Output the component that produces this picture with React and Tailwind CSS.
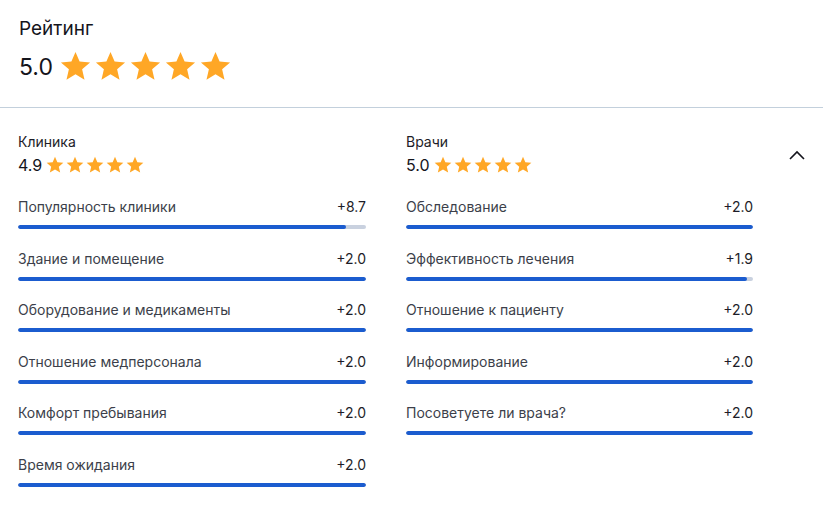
import React from "react";

const Star = ({ size }) => (
  <svg width={size} height={size} viewBox="0 0 24 24" className="shrink-0">
    <path fill="#FFA726" d="M12 17.27L18.18 21l-1.64-7.03L22 9.24l-7.19-.61L12 2 9.19 8.63 2 9.24l5.46 4.73L5.82 21z" />
  </svg>
);

const Stars = ({ size, gap }) => (
  <div className={`flex items-center ${gap}`}>
    {[0, 1, 2, 3, 4].map((i) => (
      <Star key={i} size={size} />
    ))}
  </div>
);

const Row = ({ label, value, pct }) => (
  <div className="flex flex-col h-[51.6px]">
    <div className="flex justify-between items-center text-[14px] leading-[20px]">
      <span className="text-[#3c3f4a]">{label}</span>
      <span className="text-[#1d1d28]">{value}</span>
    </div>
    <div className="mt-[8px] h-[4px] rounded-full bg-[#c9d1df] overflow-hidden">
      <div className="h-full rounded-full bg-[#1b5ccf]" style={{ width: pct + "%" }} />
    </div>
  </div>
);

const clinic = [
  ["Популярность клиники", "+8.7", 94.3],
  ["Здание и помещение", "+2.0", 100],
  ["Оборудование и медикаменты", "+2.0", 100],
  ["Отношение медперсонала", "+2.0", 100],
  ["Комфорт пребывания", "+2.0", 100],
  ["Время ожидания", "+2.0", 100],
];
const doctors = [
  ["Обследование", "+2.0", 100],
  ["Эффективность лечения", "+1.9", 98.2],
  ["Отношение к пациенту", "+2.0", 100],
  ["Информирование", "+2.0", 100],
  ["Посоветуете ли врача?", "+2.0", 100],
];

const Column = ({ title, score, rows, width }) => (
  <div className={width}>
    <div className="text-[14px] leading-[20px] text-[#1d1d28]">{title}</div>
    <div className="flex items-center mt-[2px]">
      <span className="text-[16px] leading-[22px] text-[#14141c] mr-[3px]">{score}</span>
      <Stars size={20} gap="gap-[0px]" />
    </div>
    <div className="mt-[21px]">
      {rows.map(([l, v, p]) => (
        <Row key={l} label={l} value={v} pct={p} />
      ))}
    </div>
  </div>
);

export default function App() {
  return (
    <div className="w-[823px] h-[509px] bg-white" style={{ fontFamily: "Inter, 'Noto Sans', sans-serif" }}>
      <div className="h-[108px] border-b border-[#c3d0dc] px-[19px] pt-[16px]">
        <div className="text-[19px] leading-[26px] text-[#14141c]">Рейтинг</div>
        <div className="flex items-center mt-[7px]">
          <span className="text-[23px] leading-[30px] text-[#14141c] mr-[5px]">5.0</span>
          <Stars size={35} gap="gap-[0px]" />
        </div>
      </div>
      <div className="flex pl-[18px] pt-[24px]">
        <Column title="Клиника" score="4.9" rows={clinic} width="w-[348px]" />
        <div className="w-[40px]" />
        <Column title="Врачи" score="5.0" rows={doctors} width="w-[347px]" />
        <div className="ml-[35px] mt-[18px]">
          <svg width="18" height="12" viewBox="0 0 18 12">
            <path d="M2 9 L9 2 L16 9" fill="none" stroke="#14141c" strokeWidth="1.6" />
          </svg>
        </div>
      </div>
    </div>
  );
}
